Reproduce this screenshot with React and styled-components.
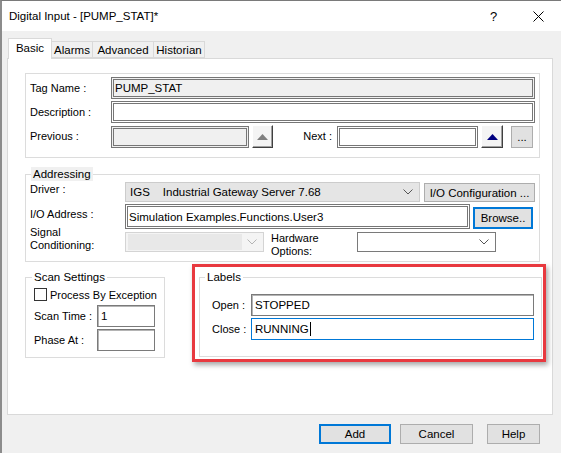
import React from "react";
import styled, { createGlobalStyle } from "styled-components";

const GlobalStyle = createGlobalStyle`
    * { box-sizing: border-box; }
    body {
        margin: 0;
        background: #f0f0f0;
        font-family: "Liberation Sans", Arial, sans-serif;
        font-size: 11px;
        color: #000;
    }
`;

const Window = styled.div`
    width: 561px;
    height: 453px;
    border-top: 1px solid #7a7a7a;
    border-left: 2px solid #8c8c8c;
    background: #f0f0f0;
    display: flex;
    flex-direction: column;
    overflow: hidden;
`;

const TitleBar = styled.div`
    height: 30px;
    background: #fff;
    display: flex;
    align-items: center;
    padding-left: 7px;
`;

const Title = styled.span`
    flex: 1;
    font-size: 11.5px;
`;

const CaptionButton = styled.span`
    width: ${(p) => p.$w}px;
    display: flex;
    justify-content: center;
    font-size: 13px;
`;

const Body = styled.div`
    flex: 1;
    display: flex;
    flex-direction: column;
    padding: 7px 8px 0 5px;
`;

const TabStrip = styled.div`
    display: flex;
    align-items: flex-end;
    height: 20px;
    margin-left: 1px;
    position: relative;
    z-index: 1;
`;

const Tab = styled.div`
    width: ${(p) => p.$w}px;
    height: ${(p) => (p.$active ? 21 : 17)}px;
    margin-bottom: ${(p) => (p.$active ? -1 : 0)}px;
    border: 1px solid #d9d9d9;
    border-bottom: ${(p) => (p.$active ? "none" : "1px solid #d9d9d9")};
    border-left: ${(p) => (p.$first ? "1px solid #d9d9d9" : "none")};
    background: ${(p) => (p.$active ? "#fff" : "#f0f0f0")};
    display: flex;
    align-items: ${(p) => (p.$active ? "flex-start" : "center")};
    padding-top: ${(p) => (p.$active ? 3 : 0)}px;
    justify-content: center;
    font-size: 11.5px;
`;

const TabPanel = styled.div`
    height: 357px;
    background: #fff;
    border: 1px solid #d9d9d9;
    padding: 14px 12px 0 17px;
    display: flex;
    flex-direction: column;
`;

const Box = styled.div`
    border: 1px solid #dcdcdc;
    padding: 3px 4px 9px 4px;
    display: flex;
    flex-direction: column;
    gap: 2px;
`;

const Group = styled.fieldset`
    margin: ${(p) => p.$mt || 0}px 0 0 0;
    border: 1px solid #dcdcdc;
    padding: ${(p) => p.$pad};
    min-width: 0;
    flex: none;
    width: ${(p) => (p.$w ? `${p.$w}px` : "auto")};
    display: flex;
    flex-direction: column;
`;

const Legend = styled.legend`
    margin-left: ${(p) => p.$ml || 0}px;
    padding: 0 2px;
    line-height: 14px;
    font-size: 11.5px;
    background: ${(p) => p.$bg || "transparent"};
`;

const Row = styled.div`
    display: flex;
    align-items: ${(p) => p.$align || "center"};
    margin-top: ${(p) => p.$mt || 0}px;
`;

const Label = styled.div`
    width: ${(p) => p.$w}px;
    flex: none;
    line-height: 13px;
    white-space: pre;
    margin-top: ${(p) => p.$mt || 0}px;
    margin-left: ${(p) => p.$ml || 0}px;
    text-align: ${(p) => (p.$right ? "right" : "left")};
    padding-right: ${(p) => (p.$right ? 5 : 0)}px;
`;

const DoubleField = styled.div`
    width: ${(p) => (p.$w ? `${p.$w}px` : "auto")};
    flex: ${(p) => (p.$w ? "none" : 1)};
    height: ${(p) => p.$h || 22}px;
    border: 3px double #767676;
    background: ${(p) => (p.$readonly ? "#f0f0f0" : "#fff")};
    padding-left: 1px;
    display: flex;
    align-items: center;
    font-size: 11.5px;
`;

const Field = styled.div`
    width: ${(p) => p.$w}px;
    height: 22px;
    flex: none;
    border: 1px solid ${(p) => (p.$focused ? "#0078d7" : "#7a7a7a")};
    box-shadow: ${(p) => (p.$focused ? "none" : "inset 1px 1px 0 #b4b4b4")};
    background: #fff;
    padding-left: 3px;
    display: flex;
    align-items: center;
    font-size: 11.5px;
`;

const Caret = styled.span`
    width: 1px;
    height: 14px;
    background: #000;
    margin-left: 1px;
`;

const SpinButton = styled.div`
    width: ${(p) => p.$w}px;
    height: 23px;
    flex: none;
    margin-left: ${(p) => p.$ml || 0}px;
    background: #f4f4f4;
    border-top: 1px solid #fff;
    border-left: 1px solid #fff;
    border-right: 1px solid #404040;
    border-bottom: 1px solid #404040;
    box-shadow: inset -1px -1px 0 #a0a0a0;
    display: flex;
    align-items: center;
    justify-content: center;
`;

const Button = styled.div`
    width: ${(p) => p.$w}px;
    height: ${(p) => p.$h || 20}px;
    flex: none;
    margin-left: ${(p) => p.$ml || 0}px;
    margin-top: ${(p) => p.$mt || 0}px;
    background: #e1e1e1;
    border: ${(p) => (p.$default ? "2px solid #0078d7" : "1px solid #adadad")};
    display: flex;
    align-items: center;
    justify-content: center;
    font-size: 11.5px;
    white-space: nowrap;
`;

const Select = styled.div`
    width: ${(p) => p.$w}px;
    height: ${(p) => p.$h || 20}px;
    flex: none;
    margin-left: ${(p) => p.$ml || 0}px;
    border: 1px solid ${(p) => p.$border};
    background: ${(p) => p.$bg};
    display: flex;
    align-items: center;
    padding: 0 6px 0 4px;
    font-size: 11.5px;
`;

const SelectText = styled.span`
    flex: 1;
    display: flex;
    gap: 13px;
`;

const DisabledFill = styled.span`
    flex: 1;
    height: 16px;
    background: #e8e8e8;
    margin-left: -2px;
    margin-right: 5px;
`;

const Highlight = styled.div`
    width: 354px;
    height: 98px;
    flex: none;
    margin-left: 27px;
    border: 3px solid #e8393f;
    box-shadow: 2px 3px 5px rgba(0, 0, 0, 0.35);
    padding: 3px 1px 0 4px;
`;

const CheckRow = styled.div`
    display: flex;
    align-items: center;
    gap: 3px;
    margin-top: 4px;
    font-size: 11px;
    white-space: nowrap;
`;

const CheckBox = styled.span`
    width: 13px;
    height: 13px;
    flex: none;
    border: 1px solid #333;
    background: #fff;
`;

const ButtonBar = styled.div`
    display: flex;
    justify-content: flex-end;
    margin-top: 9px;
    padding-right: 13px;
`;

function UpArrow({ color }) {
    return (
        <svg width="11" height="6" viewBox="0 0 11 6">
            <polygon points="0,6 5.5,0 11,6" fill={color} />
        </svg>
    );
}

function Chevron({ color }) {
    return (
        <svg width="10" height="6" viewBox="0 0 10 6">
            <polyline points="0.5,0.5 5,5 9.5,0.5" fill="none" stroke={color} strokeWidth="1" />
        </svg>
    );
}

export default function App() {
    return (
        <>
            <GlobalStyle />
            <Window>
                <TitleBar>
                    <Title>Digital Input - [PUMP_STAT]*</Title>
                    <CaptionButton $w={43}>?</CaptionButton>
                    <CaptionButton $w={46}>
                        <svg width="11" height="11" viewBox="0 0 11 11">
                            <path d="M0.5 0.5 L10.5 10.5 M10.5 0.5 L0.5 10.5" stroke="#000" strokeWidth="1" />
                        </svg>
                    </CaptionButton>
                </TitleBar>

                <Body>
                    <TabStrip>
                        <Tab $w={44} $active $first>Basic</Tab>
                        <Tab $w={41}>Alarms</Tab>
                        <Tab $w={61}>Advanced</Tab>
                        <Tab $w={51}>Historian</Tab>
                    </TabStrip>

                    <TabPanel>
                        <Box>
                            <Row>
                                <Label $w={81}>Tag Name :</Label>
                                <DoubleField $readonly>PUMP_STAT</DoubleField>
                            </Row>
                            <Row>
                                <Label $w={81}>Description :</Label>
                                <DoubleField />
                            </Row>
                            <Row>
                                <Label $w={81}>Previous :</Label>
                                <DoubleField $w={138} $readonly />
                                <SpinButton $w={21} $ml={3}>
                                    <UpArrow color="#808080" />
                                </SpinButton>
                                <Label $w={64} $right>Next :</Label>
                                <DoubleField $w={141} />
                                <SpinButton $w={22} $ml={3}>
                                    <UpArrow color="#000080" />
                                </SpinButton>
                                <Button $w={22} $h={22} $ml={8}>...</Button>
                            </Row>
                        </Box>

                        <Group $mt={9} $pad="1px 4px 3px 4px">
                            <Legend $bg="#f0f0f0" $ml={1}>Addressing</Legend>
                            <Row $align="flex-start">
                                <Label $w={95} $mt={1}>Driver :</Label>
                                <Select $w={295} $border="#cccccc" $bg="#e5e5e5">
                                    <SelectText>
                                        <span>IGS</span>
                                        <span>Industrial Gateway Server 7.68</span>
                                    </SelectText>
                                    <Chevron color="#555" />
                                </Select>
                                <Button $w={111} $h={19} $ml={4} $mt={1}>I/O Configuration ...</Button>
                            </Row>
                            <Row $align="flex-start" $mt={2}>
                                <Label $w={95} $mt={4}>I/O Address :</Label>
                                <DoubleField $w={345} $h={25}>Simulation Examples.Functions.User3</DoubleField>
                                <Button $w={60} $h={22} $ml={3} $mt={3} $default>Browse..</Button>
                            </Row>
                            <Row $align="flex-start" $mt={3}>
                                <Label $w={95} $mt={-6}>{"Signal\nConditioning:"}</Label>
                                <Select $w={139} $border="#d4d4d4" $bg="#f4f4f4">
                                    <DisabledFill />
                                    <Chevron color="#b4b4b4" />
                                </Select>
                                <Label $w={86} $ml={7}>{"Hardware\nOptions:"}</Label>
                                <Select $w={139} $border="#7a7a7a" $bg="#fff">
                                    <SelectText />
                                    <Chevron color="#555" />
                                </Select>
                            </Row>
                        </Group>

                        <Row $align="flex-start" $mt={2}>
                            <Group $w={140} $mt={6} $pad="0 9px 6px 8px">
                                <Legend $ml={-2}>Scan Settings</Legend>
                                <CheckRow>
                                    <CheckBox />
                                    Process By Exception
                                </CheckRow>
                                <Row $mt={4}>
                                    <Label $w={63}>Scan Time :</Label>
                                    <Field $w={58}>1</Field>
                                </Row>
                                <Row $mt={2}>
                                    <Label $w={63}>Phase At :</Label>
                                    <Field $w={58} />
                                </Row>
                            </Group>

                            <Highlight>
                                <Group $pad="10px 7px 16px 12px">
                                    <Legend $ml={-7}>Labels</Legend>
                                    <Row>
                                        <Label $w={39}>Open :</Label>
                                        <Field $w={283}>STOPPED</Field>
                                    </Row>
                                    <Row $mt={2}>
                                        <Label $w={39}>Close :</Label>
                                        <Field $w={283} $focused>
                                            RUNNING<Caret />
                                        </Field>
                                    </Row>
                                </Group>
                            </Highlight>
                        </Row>
                    </TabPanel>

                    <ButtonBar>
                        <Button $w={72} $default>Add</Button>
                        <Button $w={73} $ml={9}>Cancel</Button>
                        <Button $w={53} $ml={14}>Help</Button>
                    </ButtonBar>
                </Body>
            </Window>
        </>
    );
}
